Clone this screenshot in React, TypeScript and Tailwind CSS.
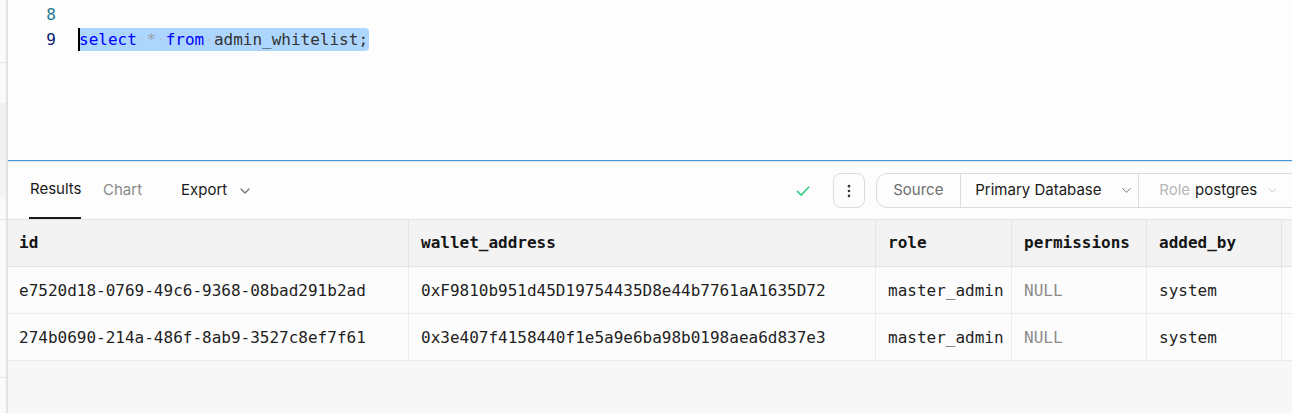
import React from "react";

const mono = { fontFamily: '"DejaVu Sans Mono", "Liberation Mono", monospace' };
const sans = { fontFamily: 'Inter, "Noto Sans", sans-serif' };

function Chevron({ className }: { className?: string }) {
  return (
    <svg viewBox="0 0 24 24" className={className} fill="none" stroke="currentColor" strokeWidth={1.6} strokeLinecap="round" strokeLinejoin="round">
      <path d="M6 9l6 6 6-6" />
    </svg>
  );
}

const rows = [
  ["e7520d18-0769-49c6-9368-08bad291b2ad", "0xF9810b951d45D19754435D8e44b7761aA1635D72", "master_admin", "NULL", "system"],
  ["274b0690-214a-486f-8ab9-3527c8ef7f61", "0x3e407f4158440f1e5a9e6ba98b0198aea6d837e3", "master_admin", "NULL", "system"],
];

const headers = ["id", "wallet_address", "role", "permissions", "added_by", ""];

export default function App() {
  return (
    <div className="w-[1292px] h-[413px] flex overflow-hidden bg-[#fafafa]" style={sans}>
      {/* left strip */}
      <div className="w-[6px] flex flex-col shrink-0">
        <div className="h-[63px] bg-[#fafafa] border-b border-[#e6e6e6]" />
        <div className="h-[40px] bg-[#fafafa]" />
        <div className="h-[57px] bg-[#f1f1f1]" />
        <div className="h-[37px] bg-[#f4f4f4]" />
        <div className="h-[23px] bg-[#fafafa] border-b border-[#e6e6e6]" />
        <div className="h-[158px] bg-[#fafafa] border-b border-[#e6e6e6]" />
        <div className="flex-1 bg-[#fafafa]" />
      </div>
      <div className="w-[2px] bg-[#e2e2e2] shrink-0" />
      {/* main */}
      <div className="flex-1 flex flex-col min-w-0 overflow-hidden">
        {/* editor */}
        <div className="h-[160px] bg-[#fdfdfd] pt-[2px] shrink-0 text-[16px]" style={mono}>
          <div className="flex h-[25px] items-center">
            <div className="w-[48px] text-right text-[#237893]">8</div>
          </div>
          <div className="flex h-[25px] items-center">
            <div className="w-[48px] text-right text-[#0b216f]">9</div>
            <div className="ml-[22px] h-[23px] flex items-center bg-[#add6ff] rounded-r-[4px] whitespace-pre relative pr-[1px]">
              <div className="absolute left-0 top-0 bottom-0 w-[2px] bg-black" />
              <span className="text-[#0000ff] ml-[1px]">select</span>
              <span className="text-[#b9c3cf]">·</span>
              <span className="text-[#9aa3ad]">*</span>
              <span className="text-[#b9c3cf]">·</span>
              <span className="text-[#0000ff]">from</span>
              <span className="text-[#b9c3cf]">·</span>
              <span className="text-[#333333]">admin_whitelist;</span>
            </div>
          </div>
        </div>
        <div className="h-px bg-[#3a9be8] shrink-0" />
        <div className="h-px bg-[#e4e4e4] shrink-0" />
        {/* toolbar */}
        <div className="h-[58px] shrink-0 flex items-stretch bg-[#fdfdfd] border-b border-[#e4e4e4] text-[15px]">
          <div className="ml-[21px] w-[52px] flex items-center border-b-2 border-[#1a1a1a] text-[#1a1a1a] whitespace-nowrap">
            <span className="ml-[1px]">Results</span>
          </div>
          <div className="ml-[22px] flex items-center text-[#8a8a8a]">Chart</div>
          <div className="ml-[39px] flex items-center text-[#1a1a1a]">
            Export
            <Chevron className="w-[16px] h-[16px] ml-[10px] text-[#666]" />
          </div>
          <div className="ml-[541px] flex items-center">
            <svg viewBox="0 0 24 24" className="w-[18px] h-[18px] text-[#3ecf8e]" fill="none" stroke="currentColor" strokeWidth={2.4} strokeLinecap="round" strokeLinejoin="round">
              <path d="M4.5 12.5l5 5 10-10.5" />
            </svg>
          </div>
          <div className="ml-[21px] flex items-center">
            <div className="w-[32px] h-[35px] rounded-[8px] border border-[#dcdcdc] bg-[#fdfdfd] flex items-center justify-center">
              <svg viewBox="0 0 24 24" className="w-[18px] h-[18px] text-[#333]" fill="currentColor">
                <circle cx="12" cy="5.5" r="1.7" />
                <circle cx="12" cy="12" r="1.7" />
                <circle cx="12" cy="18.5" r="1.7" />
              </svg>
            </div>
          </div>
          <div className="ml-[11px] flex items-center shrink-0">
            <div className="h-[35px] flex items-stretch rounded-l-[11px] border border-[#dcdcdc] bg-[#fdfdfd] shrink-0">
              <div className="w-[84px] flex items-center pl-[16px] text-[#6f6f6f] border-r border-[#dcdcdc]">Source</div>
              <div className="w-[178px] flex items-center pl-[14px] text-[#1a1a1a] border-r border-[#dcdcdc]">
                Primary Database
                <Chevron className="w-[15px] h-[15px] ml-[18px] text-[#777]" />
              </div>
              <div className="w-[170px] flex items-center pl-[20px] text-[#1a1a1a]">
                <span className="text-[#b8b8b8]">Role</span>
                <span className="ml-[5px]">postgres</span>
                <Chevron className="w-[13px] h-[13px] ml-[9px] text-[#bbb]" />
              </div>
            </div>
          </div>
        </div>
        {/* table */}
        <div className="flex-1 bg-[#f7f7f7] text-[16px]" style={mono}>
          <div className="grid grid-cols-[401px_467px_136px_135px_135px_200px] w-max">
            {headers.map((h, i) => (
              <div
                key={"h" + i}
                className={`h-[47px] bg-[#f3f3f3] border-b border-[#e4e4e4] flex items-center font-bold text-[#151515] ${i === 0 ? "pl-[11px]" : "pl-3"} ${i < 5 ? "border-r border-r-[#e4e4e4]" : ""}`}
              >
                {h}
              </div>
            ))}
            {rows.map((r, ri) =>
              [...r, ""].map((c, ci) => (
                <div
                  key={ri + "-" + ci}
                  className={`h-[47px] bg-[#fcfcfc] border-b border-[#ebebeb] flex items-center pt-[1px] whitespace-nowrap ${ci === 0 ? "pl-[11px]" : "pl-3"} ${ci < 5 ? "border-r border-r-[#ebebeb]" : ""} ${c === "NULL" ? "text-[#8c8c8c]" : "text-[#1f1f1f]"}`}
                >
                  {c}
                </div>
              ))
            )}
          </div>
        </div>
      </div>
    </div>
  );
}
